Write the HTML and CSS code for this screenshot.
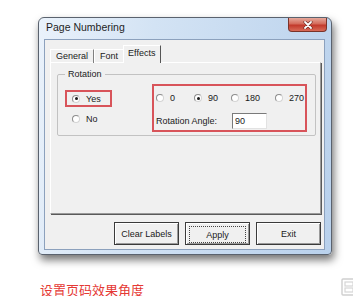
FILE: index.html
```html
<!DOCTYPE html>
<html lang="zh">
<head>
  <meta charset="UTF-8" />
  <title>Page Numbering</title>
  <link rel="stylesheet" href="styles.css">
</head>
<body>

  <div class="stage">
    <div class="window">
      <div class="titlebar">
        <span class="title">Page Numbering</span>
        <span class="close">
          <svg width="10" height="8" viewBox="0 0 10 8">
            <path d="M2 1 L8 7 M8 1 L2 7" stroke="#5a1e17" stroke-width="3" stroke-linecap="round"/>
            <path d="M2 1 L8 7 M8 1 L2 7" stroke="#ffffff" stroke-width="1.8" stroke-linecap="round"/>
          </svg>
        </span>
      </div>

      <div class="client">
        <div class="tabs">
          <span class="tab">General</span>
          <span class="tab">Font</span>
          <span class="tab active">Effects</span>
        </div>

        <div class="panel">
          <fieldset class="group">
            <legend>Rotation</legend>
            <div class="group-body">
              <div class="yesno">
                <div class="mark yes-box">
                  <span class="radio checked"></span>Yes
                </div>
                <div class="opt no-row">
                  <span class="radio"></span>No
                </div>
              </div>

              <div class="mark angle-box">
                <div class="angles">
                  <span class="opt"><span class="radio"></span>0</span>
                  <span class="opt"><span class="radio checked"></span>90</span>
                  <span class="opt"><span class="radio"></span>180</span>
                  <span class="opt"><span class="radio"></span>270</span>
                </div>
                <div class="angle-row">
                  <span class="angle-label">Rotation Angle:</span>
                  <input class="angle-input" type="text" value="90" readonly>
                </div>
              </div>
            </div>
          </fieldset>
        </div>

        <div class="buttons">
          <button>Clear Labels</button>
          <button class="focused"><span>Apply</span></button>
          <button>Exit</button>
        </div>
      </div>
    </div>
  </div>

  <div class="caption">
    <span class="caption-text">设置页码效果角度</span>
    <svg class="corner-icon" width="12" height="18" viewBox="0 0 12 18">
      <rect x="1" y="1" width="14" height="16" rx="1" fill="none" stroke="#cfcfcf" stroke-width="1.4"/>
      <rect x="4" y="4" width="8" height="4" fill="none" stroke="#d6d6d6" stroke-width="1.2"/>
      <rect x="4" y="10" width="8" height="4" fill="none" stroke="#d6d6d6" stroke-width="1.2"/>
    </svg>
  </div>

</body>
</html>
```

FILE: styles.css
```css
body {
  margin: 0;
  width: 353px;
  background: #ffffff;
  font-family: "Liberation Sans", Arial, sans-serif;
  font-size: 9px;
  color: #1a1a1a;
}

.stage {
  padding: 17px 0 0 38px;
}

/* WINDOW FRAME */
.window {
  box-sizing: border-box;
  width: 294px;
  height: 238px;
  border: 1px solid #5a626e;
  border-radius: 6px 6px 4px 4px;
  background: linear-gradient(100deg, #eaf2fb 0%, #d3e3f4 35%, #c9dcf1 60%, #b9d1ec 100%);
  box-shadow: 2px 5px 9px rgba(0, 0, 0, 0.55);
  display: flex;
  flex-direction: column;
}

.titlebar {
  height: 21px;
  display: flex;
  align-items: flex-start;
}

.title {
  padding-left: 7px;
  line-height: 18px;
  font-size: 10.5px;
  color: #1e1e1e;
}

.close {
  margin-left: auto;
  margin-right: 4px;
  width: 39px;
  height: 14px;
  box-sizing: border-box;
  border: 1px solid #7a3329;
  border-top: none;
  border-radius: 0 0 4px 4px;
  background: linear-gradient(#e6a99c 0%, #d46a5a 45%, #c2392b 55%, #d86b58 100%);
  display: flex;
  align-items: center;
  justify-content: center;
}

.client {
  flex: 1;
  margin: 0 6px 4px 5px;
  border: 1px solid #8ca1bd;
  background: #f0f0f0;
  padding: 6px 2px 0 5px;
  display: flex;
  flex-direction: column;
}

/* TABS */
.tabs {
  height: 17px;
  display: flex;
  align-items: flex-end;
  margin-bottom: -1px;
  position: relative;
  z-index: 1;
}

.tab {
  height: 14px;
  line-height: 13px;
  padding: 0 5px;
  box-sizing: border-box;
  border-top: 1px solid #ffffff;
  border-left: 1px solid #ffffff;
  border-right: 1px solid #808080;
}

.tab.active {
  height: 18px;
  line-height: 15px;
  margin-left: -1px;
  padding: 0 5px 0 4px;
  background: #f0f0f0;
  border-right: 1px solid #555555;
}

.panel {
  height: 152px;
  box-sizing: border-box;
  border: 1px solid;
  border-color: #ffffff #9a9a9a #9a9a9a #ffffff;
  box-shadow: 1px 1px 0 #5a5a5a;
  margin-right: 1px;
  padding-top: 6px;
}

/* GROUP BOX */
.group {
  margin: 0 4px 0 6px;
  padding: 4px 8px 3px 7px;
  border: 1px solid #c2c2c2;
  border-radius: 2px;
}

.group legend {
  padding: 0 3px;
  line-height: 11px;
}

.group-body {
  display: flex;
  align-items: flex-start;
}

.mark {
  border: 2px solid #d8545a;
  box-sizing: border-box;
}

.yesno {
  margin-top: 6px;
}

.yes-box {
  width: 47px;
  height: 17px;
  padding-left: 5px;
  display: flex;
  align-items: center;
}

.opt {
  display: flex;
  align-items: center;
  height: 12px;
}

.no-row {
  margin-top: 6px;
  padding-left: 7px;
}

.radio {
  width: 8px;
  height: 8px;
  box-sizing: border-box;
  border-radius: 50%;
  border: 1px solid #8d8d8d;
  border-right-color: #d4d4d4;
  border-bottom-color: #d4d4d4;
  background: #ffffff;
  margin-right: 6px;
  display: inline-flex;
  align-items: center;
  justify-content: center;
}

.radio.checked::after {
  content: "";
  width: 3px;
  height: 3px;
  border-radius: 50%;
  background: #1a1a1a;
}

.angle-box {
  margin-left: auto;
  width: 155px;
  padding: 6px 2px 1px 2px;
}

.angles {
  display: grid;
  grid-template-columns: 38px 37px 44px auto;
}

.angle-row {
  margin-top: 9px;
  display: flex;
  align-items: center;
}

.angle-label {
  width: 76px;
}

.angle-input {
  width: 35px;
  height: 16px;
  box-sizing: border-box;
  margin: 0;
  padding: 0 2px;
  font-family: inherit;
  font-size: 9px;
  color: #1a1a1a;
  background: #ffffff;
  border: 1px solid;
  border-color: #7a7a7a #e2e2e2 #e2e2e2 #7a7a7a;
  outline: none;
}

/* BUTTONS */
.buttons {
  margin-top: 8px;
  margin-right: 1px;
  display: flex;
  justify-content: flex-end;
  gap: 6px;
}

button {
  width: 65px;
  height: 23px;
  padding: 0;
  font-family: inherit;
  font-size: 9px;
  color: #1a1a1a;
  background: #f0f0f0;
  border: 1px solid #3a3a3a;
  box-shadow: inset 1px 1px 0 #ffffff, inset -1px -1px 0 #9a9a9a;
}

button.focused span {
  display: flex;
  align-items: center;
  justify-content: center;
  margin: 3px;
  height: 15px;
  border: 1px dotted #444444;
}

/* CAPTION */
.caption {
  margin-top: 28px;
  padding-left: 40px;
  display: flex;
  align-items: flex-start;
}

.caption-text {
  font-family: "Noto Sans CJK SC", "Liberation Sans", sans-serif;
  font-size: 13px;
  line-height: 13px;
  color: #e53935;
}

.corner-icon {
  margin-left: auto;
  margin-top: -5px;
}
```
